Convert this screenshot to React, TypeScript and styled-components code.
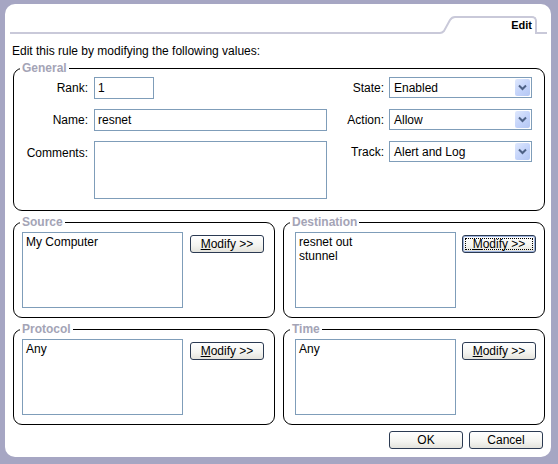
import styled, { createGlobalStyle } from 'styled-components';

const Global = createGlobalStyle`
  html, body {
    margin: 0;
    padding: 0;
  }
  body {
    background: #a6a6c3;
    font-family: 'Liberation Sans', Arial, sans-serif;
    font-size: 12px;
    line-height: 14px;
    color: #000;
  }
`;

const Page = styled.div`
  width: 558px;
  height: 464px;
  box-sizing: border-box;
  padding: 4px 7px 7px 5px;
  overflow: hidden;
`;

const Panel = styled.div`
  height: 100%;
  background: #fff;
  border-radius: 10px;
  display: flex;
  flex-direction: column;
`;

const TabRow = styled.div`
  display: flex;
  align-items: flex-end;
  height: 30px;
  padding: 0 4px 0 5px;
`;

const TabLine = styled.div<{ $width?: number }>`
  flex: ${(p) => (p.$width ? `0 0 ${p.$width}px` : '1')};
  border-bottom: 2px solid #c9c9d9;
`;

const Tab = styled.div`
  width: 82px;
  height: 18px;
  box-sizing: border-box;
  border-top: 2px solid #c9c9d9;
  border-right: 2px solid #c9c9d9;
  border-top-right-radius: 5px;
  padding: 1px 3px 0 0;
  text-align: right;
  font-size: 11px;
  font-weight: bold;
  line-height: 12px;
`;

const Content = styled.div`
  padding: 0 6px 0 8px;
  display: flex;
  flex-direction: column;
`;

const Intro = styled.div`
  margin: 10px 0 4px -1px;
`;

const Group = styled.fieldset`
  margin: 0;
  padding: 0;
  min-width: 0;
  flex: 1;
  border: 1px solid #000;
  border-radius: 9px;
`;

const Legend = styled.legend`
  margin-left: 6px;
  padding: 0 2px;
  font-weight: bold;
  color: #a4a4b6;
  line-height: 12px;
`;

const GeneralBody = styled.div`
  display: flex;
  justify-content: space-between;
  padding: 3px 12px 11px 0;
`;

const LeftGrid = styled.div`
  display: grid;
  grid-template-columns: 74px 233px;
  grid-template-rows: 22px 22px 58px;
  column-gap: 6px;
  row-gap: 10px;
`;

const RightGrid = styled.div`
  display: grid;
  grid-template-columns: auto 143px;
  grid-auto-rows: 21px;
  column-gap: 5px;
  row-gap: 11px;
`;

const Label = styled.label<{ $top?: boolean }>`
  text-align: right;
  align-self: ${(p) => (p.$top ? 'start' : 'center')};
  padding-top: ${(p) => (p.$top ? '5px' : '0')};
`;

const TextInput = styled.input`
  box-sizing: border-box;
  width: 100%;
  height: 100%;
  margin: 0;
  border: 1px solid #7f9db9;
  padding: 0 3px;
  font: inherit;
  color: #000;
  outline: none;
`;

const TextArea = styled.textarea`
  box-sizing: border-box;
  width: 100%;
  height: 100%;
  margin: 0;
  border: 1px solid #7f9db9;
  padding: 2px 3px;
  font: inherit;
  resize: none;
  outline: none;
`;

const SelectBox = styled.div`
  display: flex;
  align-items: center;
  box-sizing: border-box;
  border: 1px solid #7f9db9;
  padding: 1px 1px 1px 4px;
  background: #fff;
`;

const SelectValue = styled.span`
  flex: 1;
`;

const SelectArrow = styled.span`
  width: 15px;
  height: 17px;
  display: flex;
  align-items: center;
  justify-content: center;
  border-radius: 2px;
  background: linear-gradient(135deg, #dfe8fd 0%, #c3d3fa 55%, #b4c7f3 100%);
`;

const Pair = styled.div`
  display: flex;
  gap: 8px;
  margin-top: 5px;
`;

const GroupBody = styled.div<{ $inset: number; $gap: number }>`
  display: flex;
  align-items: flex-start;
  gap: ${(p) => p.$gap}px;
  padding: 4px 0 9px ${(p) => p.$inset}px;
`;

const ItemList = styled.div`
  width: 161px;
  height: 76px;
  box-sizing: border-box;
  border: 1px solid #7f9db9;
  padding: 2px 3px;
`;

const Button = styled.button<{ $focused?: boolean }>`
  width: 74px;
  height: 18px;
  margin: 0;
  padding: 0;
  box-sizing: border-box;
  border: 1px solid #2b3a52;
  border-radius: 3px;
  background: linear-gradient(180deg, #ffffff 0%, #f4f4f0 60%, #e4e3dc 100%);
  font: inherit;
  line-height: 14px;
  color: #000;
  outline: ${(p) => (p.$focused ? '1px dotted #000' : 'none')};
  outline-offset: -4px;
  box-shadow: ${(p) => (p.$focused ? 'inset 0 0 0 1px #9fb4de' : 'none')};
`;

const ModifyButton = styled(Button)`
  margin-top: 3px;
`;

const Footer = styled.div`
  display: flex;
  justify-content: flex-end;
  gap: 6px;
  margin-top: 6px;
  padding-right: 2px;
`;

function Chevron() {
  return (
    <svg width="9" height="7" viewBox="0 0 9 7">
      <path d="M1 1.5 L4.5 5 L8 1.5" fill="none" stroke="#4d6185" strokeWidth="2" />
    </svg>
  );
}

function Select({ value }: { value: string }) {
  return (
    <SelectBox>
      <SelectValue>{value}</SelectValue>
      <SelectArrow>
        <Chevron />
      </SelectArrow>
    </SelectBox>
  );
}

function Modify({ focused }: { focused?: boolean }) {
  return (
    <ModifyButton $focused={focused}>
      <u>M</u>odify &gt;&gt;
    </ModifyButton>
  );
}

function ListGroup({
  title,
  items,
  right,
  focused,
}: {
  title: string;
  items: string[];
  right?: boolean;
  focused?: boolean;
}) {
  return (
    <Group>
      <Legend>{title}</Legend>
      <GroupBody $inset={right ? 11 : 8} $gap={right ? 6 : 7}>
        <ItemList>
          {items.map((item) => (
            <div key={item}>{item}</div>
          ))}
        </ItemList>
        <Modify focused={focused} />
      </GroupBody>
    </Group>
  );
}

export default function App() {
  return (
    <>
      <Global />
      <Page>
        <Panel>
          <TabRow>
            <TabLine />
            <svg width="17" height="18" viewBox="0 0 17 18">
              <path
                d="M0 17 L2 17 Q4 17 6 15 L12 4 Q14 1 17 1"
                fill="none"
                stroke="#c9c9d9"
                strokeWidth="2"
              />
            </svg>
            <Tab>Edit</Tab>
            <TabLine $width={10} />
          </TabRow>
          <Content>
            <Intro>Edit this rule by modifying the following values:</Intro>
            <Group>
              <Legend>General</Legend>
              <GeneralBody>
                <LeftGrid>
                  <Label>Rank:</Label>
                  <TextInput readOnly defaultValue="1" style={{ width: 60 }} />
                  <Label>Name:</Label>
                  <TextInput readOnly defaultValue="resnet" />
                  <Label $top>Comments:</Label>
                  <TextArea readOnly defaultValue="" />
                </LeftGrid>
                <RightGrid>
                  <Label>State:</Label>
                  <Select value="Enabled" />
                  <Label>Action:</Label>
                  <Select value="Allow" />
                  <Label>Track:</Label>
                  <Select value="Alert and Log" />
                </RightGrid>
              </GeneralBody>
            </Group>
            <Pair>
              <ListGroup title="Source" items={['My Computer']} />
              <ListGroup title="Destination" items={['resnet out', 'stunnel']} right focused />
            </Pair>
            <Pair>
              <ListGroup title="Protocol" items={['Any']} />
              <ListGroup title="Time" items={['Any']} right />
            </Pair>
            <Footer>
              <Button>OK</Button>
              <Button>Cancel</Button>
            </Footer>
          </Content>
        </Panel>
      </Page>
    </>
  );
}
